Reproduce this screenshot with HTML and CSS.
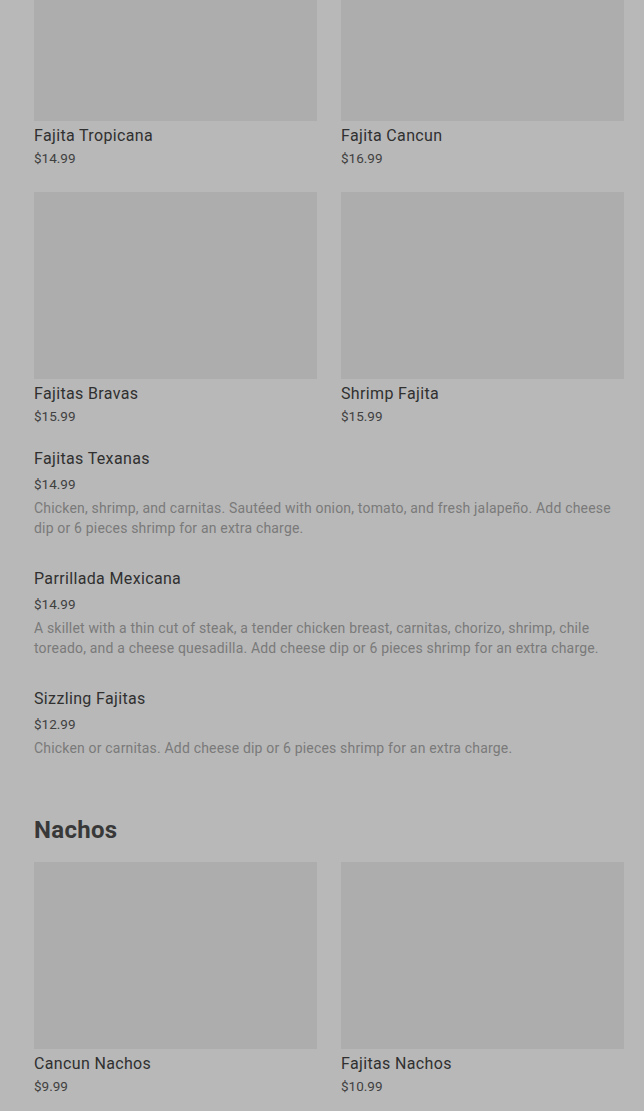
FILE: index.html
```html
<!DOCTYPE html>
<html>
<head>
<meta charset="utf-8">
<link rel="stylesheet" href="styles.css">
</head>
<body>
<main class="page">
  <div class="grid first">
    <div class="card"><div class="thumb"></div><div class="name">Fajita Tropicana</div><div class="price">$14.99</div></div>
    <div class="card"><div class="thumb"></div><div class="name">Fajita Cancun</div><div class="price">$16.99</div></div>
    <div class="card"><div class="thumb"></div><div class="name">Fajitas Bravas</div><div class="price">$15.99</div></div>
    <div class="card"><div class="thumb"></div><div class="name">Shrimp Fajita</div><div class="price">$15.99</div></div>
  </div>
  <div class="list">
    <div class="item">
      <div class="item-name">Fajitas Texanas</div>
      <div class="item-price">$14.99</div>
      <div class="desc">Chicken, shrimp, and carnitas. Sautéed with onion, tomato, and fresh jalapeño. Add cheese dip or 6 pieces shrimp for an extra charge.</div>
    </div>
    <div class="item">
      <div class="item-name">Parrillada Mexicana</div>
      <div class="item-price">$14.99</div>
      <div class="desc">A skillet with a thin cut of steak, a tender chicken breast, carnitas, chorizo, shrimp, chile toreado, and a cheese quesadilla. Add cheese dip or 6 pieces shrimp for an extra charge.</div>
    </div>
    <div class="item">
      <div class="item-name">Sizzling Fajitas</div>
      <div class="item-price">$12.99</div>
      <div class="desc">Chicken or carnitas. Add cheese dip or 6 pieces shrimp for an extra charge.</div>
    </div>
  </div>
  <h2 class="section-title">Nachos</h2>
  <div class="grid">
    <div class="card"><div class="thumb"></div><div class="name">Cancun Nachos</div><div class="price">$9.99</div></div>
    <div class="card"><div class="thumb"></div><div class="name">Fajitas Nachos</div><div class="price">$10.99</div></div>
  </div>
</main>
</body>
</html>
```
FILE: styles.css
```css
html, body {
  margin: 0;
  padding: 0;
  background: #b8b8b8;
}
body {
  font-family: Roboto, "Liberation Sans", sans-serif;
  color: #3a3a3a;
  overflow: hidden;
  height: 1111px;
}
.page {
  padding: 0 20px 0 34px;
}
.grid {
  display: grid;
  grid-template-columns: 1fr 1fr;
  column-gap: 24px;
  row-gap: 24px;
}
.grid.first {
  margin-top: -66px;
}
.thumb {
  height: 187px;
  background: #adadad;
}
.name {
  margin-top: 4px;
  font-size: 16px;
  line-height: 22px;
  font-weight: 400;
  letter-spacing: 0.35px;
  color: #303030;
}
.price {
  margin-top: 1px;
  font-size: 13.5px;
  line-height: 20px;
  color: #404040;
}
.list {
  padding-top: 21px;
}
.item + .item {
  margin-top: 29px;
}
.item-name {
  font-size: 16px;
  line-height: 24px;
  font-weight: 400;
  letter-spacing: 0.35px;
  color: #303030;
}
.item-price {
  margin-top: 3px;
  font-size: 13.5px;
  line-height: 20px;
  color: #404040;
}
.desc {
  margin-top: 4px;
  font-size: 14px;
  line-height: 20px;
  letter-spacing: 0.18px;
  color: #7a7a7a;
}
.section-title {
  margin: 56px 0 16px;
  font-size: 24px;
  line-height: 32px;
  font-weight: 700;
  letter-spacing: 0.3px;
  color: #383838;
}
```
